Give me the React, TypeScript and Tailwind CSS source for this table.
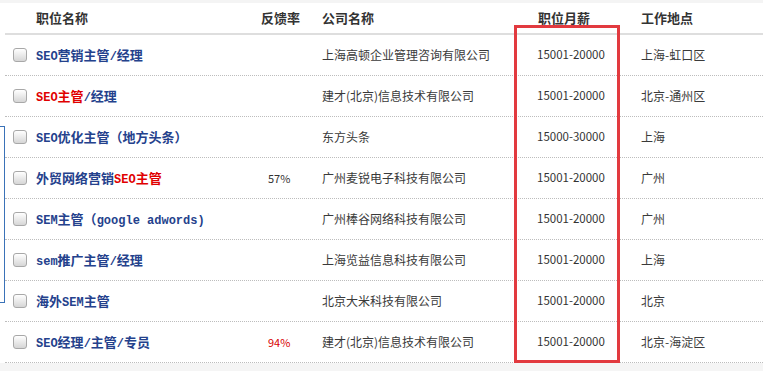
import React from "react";

type Seg = { t: string; red?: boolean; latin?: boolean };

type Job = {
  title: Seg[];
  rate?: string;
  rateRed?: boolean;
  company: string;
  salary: string;
  city: string;
};

const jobs: Job[] = [
  {
    title: [{ t: "SEO", latin: true }, { t: "营销主管" }, { t: "/", latin: true }, { t: "经理" }],
    company: "上海高顿企业管理咨询有限公司",
    salary: "15001-20000",
    city: "上海-虹口区",
  },
  {
    title: [
      { t: "SEO", latin: true, red: true },
      { t: "主管", red: true },
      { t: "/", latin: true },
      { t: "经理" },
    ],
    company: "建才(北京)信息技术有限公司",
    salary: "15001-20000",
    city: "北京-通州区",
  },
  {
    title: [{ t: "SEO", latin: true }, { t: "优化主管（地方头条）" }],
    company: "东方头条",
    salary: "15000-30000",
    city: "上海",
  },
  {
    title: [{ t: "外贸网络营销" }, { t: "SEO", latin: true, red: true }, { t: "主管", red: true }],
    rate: "57%",
    company: "广州麦锐电子科技有限公司",
    salary: "15001-20000",
    city: "广州",
  },
  {
    title: [{ t: "SEM", latin: true }, { t: "主管（" }, { t: "google adwords)", latin: true }],
    company: "广州棒谷网络科技有限公司",
    salary: "15001-20000",
    city: "广州",
  },
  {
    title: [{ t: "sem", latin: true }, { t: "推广主管" }, { t: "/", latin: true }, { t: "经理" }],
    company: "上海览益信息科技有限公司",
    salary: "15001-20000",
    city: "上海",
  },
  {
    title: [{ t: "海外" }, { t: "SEM", latin: true }, { t: "主管" }],
    company: "北京大米科技有限公司",
    salary: "15001-20000",
    city: "北京",
  },
  {
    title: [
      { t: "SEO", latin: true },
      { t: "经理" },
      { t: "/", latin: true },
      { t: "主管" },
      { t: "/", latin: true },
      { t: "专员" },
    ],
    rate: "94%",
    rateRed: true,
    company: "建才(北京)信息技术有限公司",
    salary: "15001-20000",
    city: "北京-海淀区",
  },
];

const cols = "grid grid-cols-[31px_225px_61px_215px_104px_1fr]";

const CheckBox = () => (
  <div className="w-[14px] h-[14px] rounded-[3px] border border-[#a8a8a8] bg-gradient-to-b from-[#ffffff] to-[#d6d6d6] -mt-[1px]" />
);

export default function App() {
  return (
    <div className="relative w-[763px] h-[371px] bg-white overflow-hidden font-['Noto_Sans_CJK_SC',sans-serif] text-[#333]">
      <div className="h-[3px] bg-[#f4f4f4]" />
      <div className="pl-[5px]">
        <div className={`${cols} h-[32px] items-center border-b-2 border-[#dedede] text-[13px] font-bold text-[#333]`}>
          <div />
          <div>职位名称</div>
          <div>反馈率</div>
          <div>公司名称</div>
          <div className="pl-[1px]">职位月薪</div>
          <div>工作地点</div>
        </div>
        {jobs.map((j, i) => (
          <div
            key={i}
            className={`${cols} h-[41px] items-center border-b border-dotted border-[#bdbdbd]`}
          >
            <div className="pl-[8px]">
              <CheckBox />
            </div>
            <div className="text-[13px] font-bold text-[#24418c] whitespace-nowrap">
              {j.title.map((s, k) => (
                <span
                  key={k}
                  className={`${s.latin ? "font-['Liberation_Mono',monospace] text-[12px]" : ""} ${s.red ? "text-[#e00000]" : ""}`}
                >
                  {s.t}
                </span>
              ))}
            </div>
            <div className={`pl-[7px] text-[11px] ${j.rateRed ? "text-[#d80000]" : "text-[#333]"}`}>
              {j.rate}
            </div>
            <div className="text-[12px] text-[#3a3a3a] whitespace-nowrap">{j.company}</div>
            <div className="text-[11.5px] text-[#333]">{j.salary}</div>
            <div className="text-[12px] text-[#3a3a3a]">{j.city}</div>
          </div>
        ))}
      </div>
      <div className="h-[9px] bg-[#f5f5f5]" />

      {/* red highlight box around salary column */}
      <div className="absolute left-[514px] top-[25px] w-[106px] h-[338px] border-[3px] border-[#e23a3f]" />

      {/* blue bracket on the left edge */}
      <div className="absolute left-0 top-[126px] w-[5px] h-[177px] border-y border-r border-[#3a72b8]" />
    </div>
  );
}
